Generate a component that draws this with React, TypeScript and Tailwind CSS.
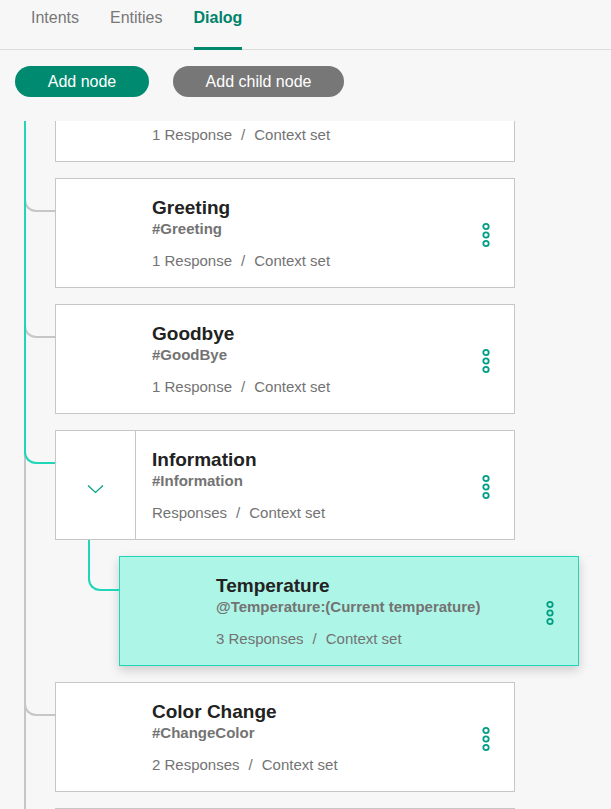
import React from "react";

type Node = {
  title?: string;
  sub?: string;
  meta?: [string, string];
  spine: "teal" | "gray" | "split";
  child?: boolean;
  active?: boolean;
  expand?: boolean;
};

// first node is scrolled mostly out of view, last one only shows its top edge
const nodes: Node[] = [
  { meta: ["1 Response", "Context set"], spine: "teal" },
  { title: "Greeting", sub: "#Greeting", meta: ["1 Response", "Context set"], spine: "teal" },
  { title: "Goodbye", sub: "#GoodBye", meta: ["1 Response", "Context set"], spine: "teal" },
  { title: "Information", sub: "#Information", meta: ["Responses", "Context set"], spine: "split", expand: true },
  { title: "Temperature", sub: "@Temperature:(Current temperature)", meta: ["3 Responses", "Context set"], spine: "gray", child: true, active: true },
  { title: "Color Change", sub: "#ChangeColor", meta: ["2 Responses", "Context set"], spine: "gray" },
  { spine: "gray" },
];

function Dots() {
  return (
    <svg width="10" height="26" viewBox="0 0 10 26" className="shrink-0">
      {[4.5, 13, 21.5].map(cy => (
        <circle key={cy} cx="5" cy={cy} r="2.7" fill="none" stroke="#009e85" strokeWidth="1.8" />
      ))}
    </svg>
  );
}

function Chevron() {
  return (
    <svg width="17" height="10" viewBox="0 0 17 10">
      <path d="M1 1.5 L8.5 8.5 L16 1.5" fill="none" stroke="#00a085" strokeWidth="1.2" />
    </svg>
  );
}

function Card({ n }: { n: Node }) {
  const box = n.active
    ? "border-[#1fd6b8] bg-[#adf5e6] shadow-[0_4px_10px_rgba(0,0,0,0.18)]"
    : "border-[#c6c6c6] bg-white";
  return (
    <div className={`flex h-[110px] w-[460px] shrink-0 border ${box}`}>
      {n.expand ? (
        <div className="flex w-[80px] items-center justify-center border-r border-[#c6c6c6] pt-[8px]">
          <Chevron />
        </div>
      ) : (
        <div className="w-[96px]" />
      )}
      <div className={`flex-1 pt-[18px] ${n.expand ? "pl-[16px]" : ""}`}>
        <div className="h-[22px] text-[19px] leading-[22px] font-bold text-[#222]">{n.title}</div>
        <div className="h-[20px] text-[15px] leading-[20px] font-bold text-[#737373]">{n.sub}</div>
        {n.meta && (
          <div className="mt-[12px] text-[15px] leading-[20px] text-[#737373]">
            {n.meta[0]}
            <span className="mx-[9px]">/</span>
            {n.meta[1]}
          </div>
        )}
      </div>
      {n.title && (
        <div className="mr-[23px] flex items-center pt-[4px]">
          <Dots />
        </div>
      )}
    </div>
  );
}

function Row({ n }: { n: Node }) {
  const curveColor = n.child || n.spine === "split" ? "border-[#1fd6b8]" : "border-[#c6c6c6]";
  const curve = n.child ? (
    <div className={`absolute left-[88px] top-[-16px] h-[51px] w-[31px] rounded-bl-[12px] border-b-2 border-l-2 ${curveColor}`} />
  ) : (
    <div className={`absolute left-[24px] top-[19px] h-[15px] w-[31px] rounded-bl-[12px] border-b-2 border-l-2 ${curveColor}`} />
  );
  const spine = (
    <div
      className={`absolute bottom-0 left-[24px] top-0 w-[2px] ${n.spine === "teal" ? "bg-[#1fd6b8]" : "bg-[#c6c6c6]"}`}
    />
  );
  return (
    <div className={`relative flex pb-[16px] ${n.child ? "pl-[119px]" : "pl-[55px]"}`}>
      {n.spine === "teal" ? (
        <>
          {curve}
          {spine}
        </>
      ) : (
        <>
          {spine}
          {curve}
        </>
      )}
      {n.spine === "split" && <div className="absolute left-[24px] top-0 h-[24px] w-[2px] bg-[#1fd6b8]" />}
      <Card n={n} />
    </div>
  );
}

export default function App() {
  const tabs = ["Intents", "Entities", "Dialog"];
  return (
    <div className="h-[809px] w-[611px] overflow-hidden bg-[#f7f7f7] font-['Liberation_Sans',Arial,sans-serif]">
      <div className="flex h-[50px] items-start gap-[31px] border-b border-[#dcdcdc] pl-[31px]">
        {tabs.map(t => (
          <div
            key={t}
            className={`h-[50px] pt-[8px] text-[16px] leading-[20px] ${
              t === "Dialog" ? "border-b-[3px] border-[#00876c] font-bold text-[#00826b]" : "text-[#777]"
            }`}
          >
            {t}
          </div>
        ))}
      </div>

      <div className="mt-[16px] flex gap-[24px] pl-[15px]">
        <button className="h-[31px] w-[134px] rounded-full bg-[#008a70] text-[16px] text-white">Add node</button>
        <button className="h-[31px] w-[171px] rounded-full bg-[#777777] text-[16px] text-white">Add child node</button>
      </div>

      <div className="mt-[24px] h-[688px] overflow-hidden">
        <div className="-mt-[69px]">
          {nodes.map((n, i) => (
            <Row key={i} n={n} />
          ))}
        </div>
      </div>
    </div>
  );
}
